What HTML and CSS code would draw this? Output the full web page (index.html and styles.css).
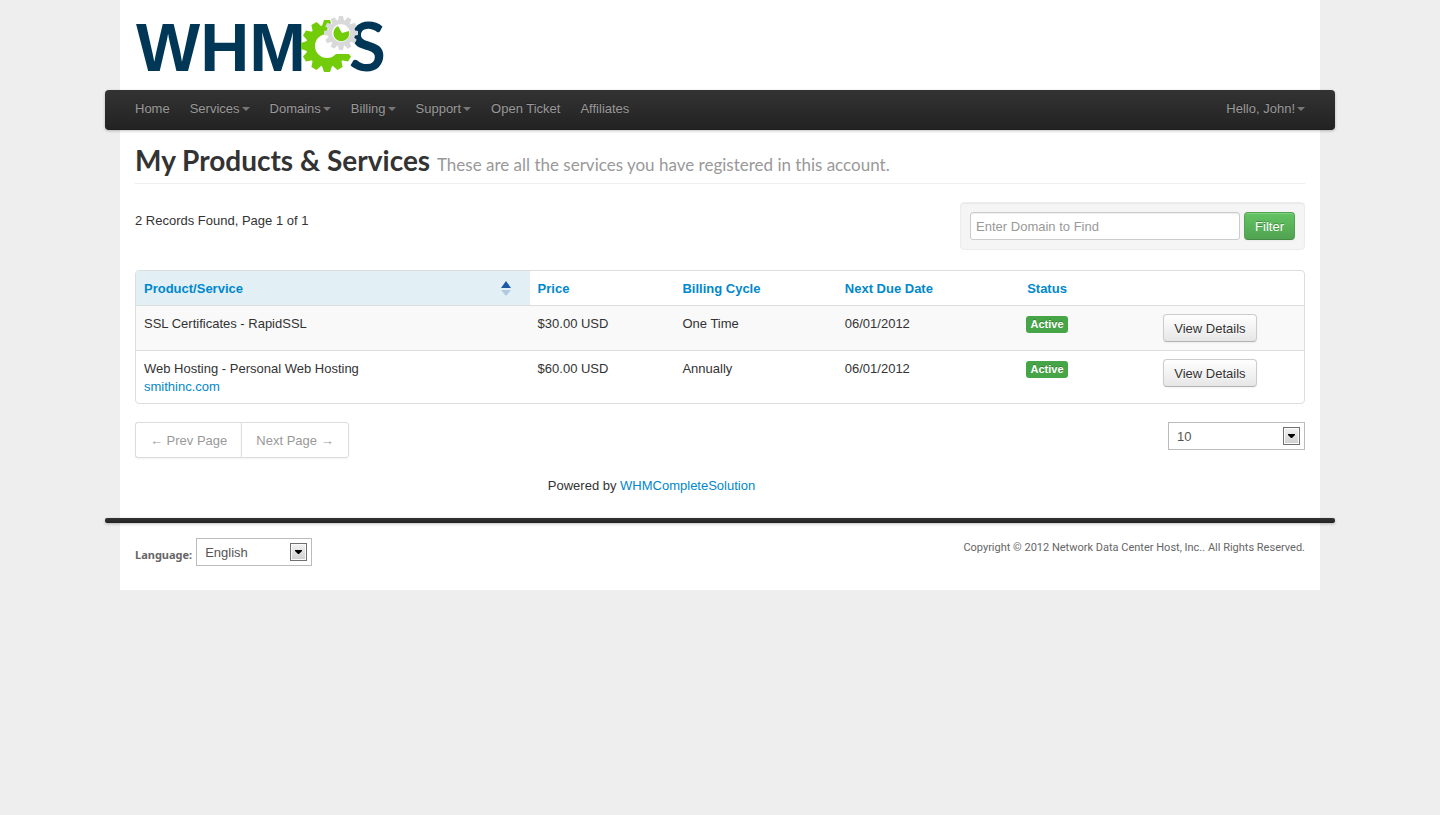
FILE: index.html
```html
<!DOCTYPE html>
<html lang="en">
<head>
<meta charset="utf-8">
<title>My Products &amp; Services</title>
<link rel="stylesheet" href="styles.css">
</head>
<body>
<div class="page">
  <header class="header">
    <a href="#" class="logo" aria-label="WHMCS">
      <svg width="250" height="90" viewBox="0 0 250 90">
        <defs>
          <path id="tooth" d="M-5-20L-3-26H3L5-20Z"/>
          <path id="small-tooth" d="M-3-12L-2-17H2L3-12Z"/>
        </defs>
        <text class="logo-text" x="1" y="71">WHM</text>
        <text class="logo-text logo-text-s" x="214" y="71">S</text>
        <g transform="translate(192 46)" fill="#72cc0a">
          <circle r="16.5" fill="none" stroke="#72cc0a" stroke-width="9"/>
          <use href="#tooth"/><use href="#tooth" transform="rotate(30)"/><use href="#tooth" transform="rotate(120)"/>
          <use href="#tooth" transform="rotate(150)"/><use href="#tooth" transform="rotate(180)"/><use href="#tooth" transform="rotate(210)"/>
          <use href="#tooth" transform="rotate(240)"/><use href="#tooth" transform="rotate(270)"/><use href="#tooth" transform="rotate(300)"/>
          <use href="#tooth" transform="rotate(330)"/>
          <path d="M7-20H23V8H9L0 0Z" fill="#fff"/>
        </g>
        <g transform="translate(206 33)">
          <circle r="14" fill="#fff"/>
          <g fill="#d9d9d9">
            <circle r="11" fill="none" stroke="#d9d9d9" stroke-width="4"/>
            <use href="#small-tooth"/><use href="#small-tooth" transform="rotate(30)"/><use href="#small-tooth" transform="rotate(60)"/>
            <use href="#small-tooth" transform="rotate(90)"/><use href="#small-tooth" transform="rotate(120)"/><use href="#small-tooth" transform="rotate(150)"/>
            <use href="#small-tooth" transform="rotate(180)"/><use href="#small-tooth" transform="rotate(210)"/><use href="#small-tooth" transform="rotate(240)"/>
            <use href="#small-tooth" transform="rotate(270)"/><use href="#small-tooth" transform="rotate(300)"/><use href="#small-tooth" transform="rotate(330)"/>
          </g>
          <path d="M1 0L-3-7A8 8 0 1 0 8-2Z" fill="#72cc0a"/>
        </g>
      </svg>
    </a>
  </header>

  <nav class="navbar">
    <ul class="nav">
      <li><a href="#">Home</a></li>
      <li><a href="#">Services<span class="caret"></span></a></li>
      <li><a href="#">Domains<span class="caret"></span></a></li>
      <li><a href="#">Billing<span class="caret"></span></a></li>
      <li><a href="#">Support<span class="caret"></span></a></li>
      <li><a href="#">Open Ticket</a></li>
      <li><a href="#">Affiliates</a></li>
    </ul>
    <ul class="nav">
      <li><a href="#">Hello, John!<span class="caret"></span></a></li>
    </ul>
  </nav>

  <main>
    <div class="page-header">
      <h1>My Products &amp; Services <small>These are all the services you have registered in this account.</small></h1>
    </div>

    <div class="toolbar">
      <p class="records">2 Records Found, Page 1 of 1</p>
      <form class="search">
        <input type="text" placeholder="Enter Domain to Find" aria-label="Enter Domain to Find">
        <button type="button" class="btn btn-success">Filter</button>
      </form>
    </div>

    <table class="services">
      <colgroup>
        <col class="col-product"><col class="col-price"><col class="col-cycle"><col class="col-due"><col class="col-status"><col>
      </colgroup>
      <thead>
        <tr>
          <th class="sorted">
            <div class="sort-head">
              <a href="#">Product/Service</a>
              <svg width="10" height="16" viewBox="0 0 10 16"><path d="M5 0L10 7H0Z" fill="#1c5aa6"/><path d="M0 9H10L5 15Z" fill="#b1c9df"/></svg>
            </div>
          </th>
          <th><a href="#">Price</a></th>
          <th><a href="#">Billing Cycle</a></th>
          <th><a href="#">Next Due Date</a></th>
          <th class="center"><a href="#">Status</a></th>
          <th></th>
        </tr>
      </thead>
      <tbody>
        <tr>
          <td>SSL Certificates - RapidSSL</td>
          <td>$30.00 USD</td>
          <td>One Time</td>
          <td>06/01/2012</td>
          <td class="center"><span class="label">Active</span></td>
          <td class="center"><button type="button" class="btn">View Details</button></td>
        </tr>
        <tr>
          <td>Web Hosting - Personal Web Hosting<br><a href="#">smithinc.com</a></td>
          <td>$60.00 USD</td>
          <td>Annually</td>
          <td>06/01/2012</td>
          <td class="center"><span class="label">Active</span></td>
          <td class="center"><button type="button" class="btn">View Details</button></td>
        </tr>
      </tbody>
    </table>

    <div class="bottom">
      <div class="bottom-main">
        <ul class="pagination">
          <li><a href="#">← Prev Page</a></li>
          <li><a href="#">Next Page →</a></li>
        </ul>
        <p class="powered">Powered by <a href="#">WHMCompleteSolution</a></p>
      </div>
      <div class="select-box select-count">
        <select aria-label="Records per page"><option>10</option><option>25</option><option>50</option></select>
        <svg class="select-arrow" width="9" height="5" viewBox="0 0 9 5"><path d="M1 0H8V1L5 4H4L1 1Z"/></svg>
      </div>
    </div>
  </main>

  <div class="footer-bar"></div>
  <footer class="footer">
    <div class="language">
      <label for="language">Language:</label>
      <div class="select-box select-language">
        <select id="language"><option>English</option></select>
        <svg class="select-arrow" width="9" height="5" viewBox="0 0 9 5"><path d="M1 0H8V1L5 4H4L1 1Z"/></svg>
      </div>
    </div>
    <p class="copyright">Copyright © 2012 Network Data Center Host, Inc.. All Rights Reserved.</p>
  </footer>
</div>
</body>
</html>
```

FILE: styles.css
```css
* { box-sizing: border-box; }
body {
  margin: 0;
  background: #eee;
  color: #333;
  font: 13px/18px "Liberation Sans", Arial, sans-serif;
}
a { color: #08c; text-decoration: none; }
ul, p, h1 { margin: 0; padding: 0; list-style: none; }
button, input, select { font: inherit; }

.page {
  max-width: 1200px;
  margin: 0 auto;
  padding: 0 15px;
  background: #fff;
}
.logo, .logo svg { display: block; }
.logo-text { font: 700 68px "Liberation Sans", Arial, sans-serif; fill: #003656; }
.logo-text-s { font: 700 67px Lato, sans-serif; }

.navbar {
  display: flex;
  justify-content: space-between;
  margin: 0 -30px;
  padding: 0 20px;
  border-radius: 4px;
  background: linear-gradient(#333, #222);
  box-shadow: 0 1px 3px rgba(0, 0, 0, .25), inset 0 -1px 0 rgba(0, 0, 0, .1);
}
.nav { display: flex; }
.nav a {
  display: flex;
  align-items: center;
  gap: 2px;
  padding: 10px 10px 12px;
  color: #999;
  text-shadow: 0 -1px 0 rgba(0, 0, 0, .25);
}
.caret {
  border: 4px solid transparent;
  border-top-color: #777;
  border-bottom: 0;
}

.page-header {
  padding: 9px 0 2px;
  border-bottom: 1px solid #eee;
}
h1 { font: 700 28px/42px Lato, sans-serif; }
h1 small { font-size: 17px; line-height: 20px; color: #999; font-weight: 400; }

.toolbar {
  display: flex;
  justify-content: space-between;
  padding: 18px 0 20px;
}
.records { padding-top: 10px; }
.search {
  display: flex;
  gap: 4px;
  padding: 9px;
  background: #f5f5f5;
  border: 1px solid #ececec;
  border-radius: 4px;
  box-shadow: inset 0 1px 1px rgba(0, 0, 0, .05);
}
.search input {
  width: 270px;
  height: 28px;
  padding: 4px 5px;
  border: 1px solid #ccc;
  border-radius: 3px;
  box-shadow: inset 0 1px 1px rgba(0, 0, 0, .075);
}
.search input::placeholder { color: #999; }
.btn {
  height: 28px;
  padding: 1px 10px 0;
  border: 1px solid #ccc;
  border-bottom-color: #b3b3b3;
  border-radius: 4px;
  background: linear-gradient(#fff, #e6e6e6);
  color: #333;
  text-shadow: 0 1px 1px rgba(255, 255, 255, .75);
  box-shadow: inset 0 1px 0 rgba(255, 255, 255, .2), 0 1px 2px rgba(0, 0, 0, .05);
}
.btn-success {
  border-color: #51a351 #51a351 #458a45;
  background: linear-gradient(#62c462, #51a351);
  color: #fff;
  text-shadow: 0 -1px 0 rgba(0, 0, 0, .25);
}

.services {
  width: 100%;
  table-layout: fixed;
  border: 1px solid #ddd;
  border-radius: 4px;
  border-collapse: separate;
  border-spacing: 0;
}
.col-product { width: 33.7%; }
.col-price { width: 12.4%; }
.col-cycle { width: 13.9%; }
.col-due { width: 12.1%; }
.col-status { width: 11.8%; }
.services th, .services td {
  padding: 9px 8px 7px;
  text-align: left;
  vertical-align: top;
}
.services td { border-top: 1px solid #ddd; }
.services td.center { padding: 8px; }
.services tbody tr:first-child td { background: #f9f9f9; }
.services .sorted { background: #e2f0f6; border-top-left-radius: 3px; }
.services .center { text-align: center; }
.services .btn { display: block; margin: 0 auto; }
.sort-head {
  display: flex;
  justify-content: space-between;
  align-items: center;
  padding-right: 11px;
}
.label {
  display: inline-block;
  margin-top: 2px;
  padding: 1px 4px 2px;
  border-radius: 3px;
  background: #46a546;
  color: #fff;
  font-size: 11px;
  line-height: 14px;
  font-weight: 700;
  text-shadow: 0 -1px 0 rgba(0, 0, 0, .25);
}

.bottom {
  display: flex;
  align-items: flex-start;
  padding: 18px 0 23px;
}
.bottom-main { flex: 1; }
.pagination { display: flex; }
.pagination a {
  display: block;
  padding: 2px 14px 0;
  border: 1px solid #ddd;
  color: #999;
  line-height: 32px;
  box-shadow: 0 1px 2px rgba(0, 0, 0, .05);
}
.pagination li:first-child a { border-right: 0; border-radius: 3px 0 0 3px; }
.pagination li:last-child a { border-radius: 0 3px 3px 0; }
.powered { padding-top: 19px; text-align: center; }

.select-box { position: relative; }
.select-box select {
  display: block;
  width: 100%;
  height: 28px;
  padding: 1px 8px 0;
  border: 1px solid #bbb;
  border-radius: 0;
  background: #fff;
  color: #555;
  appearance: none;
}
.select-arrow {
  position: absolute;
  top: 5px;
  right: 5px;
  width: 17px;
  height: 18px;
  padding: 6px 3px 5px;
  border: 1px solid #707070;
  background: linear-gradient(#f2f2f2, #cfcfcf);
  box-shadow: inset 0 0 0 1px #fafafa;
  pointer-events: none;
}
.select-count { width: 137px; }
.select-language { width: 116px; }

.footer-bar {
  height: 5px;
  margin: 0 -30px;
  border-radius: 2px;
  background: linear-gradient(#333, #222);
  box-shadow: 0 1px 3px rgba(0, 0, 0, .25);
}
.footer {
  display: flex;
  justify-content: space-between;
  padding: 15px 0 24px;
  color: #666;
  font: 11px/18px "Noto Sans", sans-serif;
}
.language { display: flex; gap: 4px; }
.language label { padding-top: 8px; font-weight: 700; }
.language select { font: 13px/18px "Liberation Sans", Arial, sans-serif; }
.copyright { padding-top: 1px; font-family: Roboto, sans-serif; }
```
